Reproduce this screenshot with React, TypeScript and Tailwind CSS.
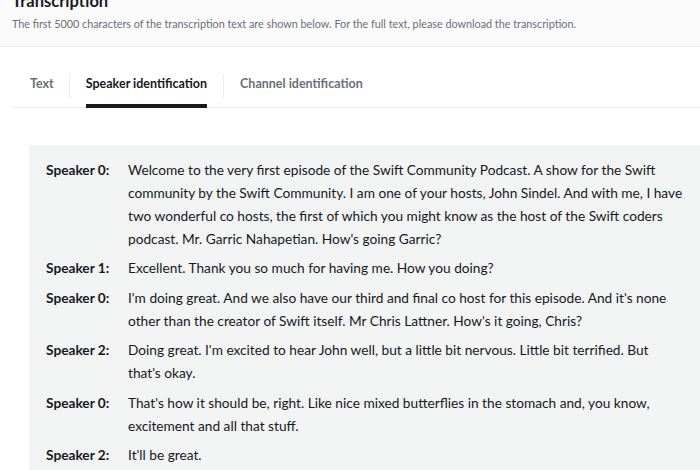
const lines: { speaker: string; text: string }[] = [
  {
    speaker: "Speaker 0:",
    text: "Welcome to the very first episode of the Swift Community Podcast. A show for the Swift community by the Swift Community. I am one of your hosts, John Sindel. And with me, I have two wonderful co hosts, the first of which you might know as the host of the Swift coders podcast. Mr. Garric Nahapetian. How's going Garric?",
  },
  {
    speaker: "Speaker 1:",
    text: "Excellent. Thank you so much for having me. How you doing?",
  },
  {
    speaker: "Speaker 0:",
    text: "I'm doing great. And we also have our third and final co host for this episode. And it's none other than the creator of Swift itself. Mr Chris Lattner. How's it going, Chris?",
  },
  {
    speaker: "Speaker 2:",
    // keeps the wrap the transcript has at this width
    text: "Doing great. I'm excited to hear John well, but a little bit nervous. Little bit terrified. But\nthat's okay.",
  },
  {
    speaker: "Speaker 0:",
    text: "That's how it should be, right. Like nice mixed butterflies in the stomach and, you know, excitement and all that stuff.",
  },
  { speaker: "Speaker 2:", text: "It'll be great." },
];

const tabs = ["Text", "Speaker identification", "Channel identification"];

export default function App() {
  return (
    <div
      className="h-[470px] w-[700px] overflow-hidden bg-white text-[#16191f]"
      style={{ fontFamily: 'Lato, "Noto Sans", sans-serif' }}
    >
      <div className="-mt-[11px] border-b border-[#eaeded] bg-[#fafafa] px-3 pb-[13px]">
        <h2 className="text-[16.5px] font-bold leading-[24px]">Transcription</h2>
        <p className="mt-[2px] text-[10.8px] leading-[18px] text-[#687078]">
          The first 5000 characters of the transcription text are shown below. For the full text, please download the transcription.
        </p>
      </div>

      <div className="ml-3 mt-[18px] flex border-b border-[#eaeded]">
        {tabs.map((t, i) => (
          <div key={t} className="flex items-center">
            {i > 0 ? <div className="h-[24px] w-px bg-[#eaeded]" /> : null}
            <div
              className={
                (i === 0 ? "ml-[18px] mr-[15px] " : "mx-4 ") +
                (i === 1
                  ? "-mb-px border-b-[4px] border-[#16191f] pb-[8px] pt-[7px] text-[12.5px] font-bold leading-[24px] text-[#16191f]"
                  : "-mb-px border-b-[4px] border-transparent pb-[8px] pt-[7px] text-[12.5px] font-bold leading-[24px] text-[#687078]")
              }
            >
              {t}
            </div>
          </div>
        ))}
      </div>

      <div className="ml-[29px] mt-[37px] bg-[#f2f3f3] pb-4 pl-[17px] pr-[15px] pt-[13px]">
        {lines.map((l, i) => (
          <div key={i} className="mb-[6.4px] flex text-[13.7px] leading-[23px]">
            <div className="w-[82px] shrink-0 font-bold">{l.speaker}</div>
            <div className="flex-1 whitespace-pre-line">{l.text}</div>
          </div>
        ))}
      </div>
    </div>
  );
}
